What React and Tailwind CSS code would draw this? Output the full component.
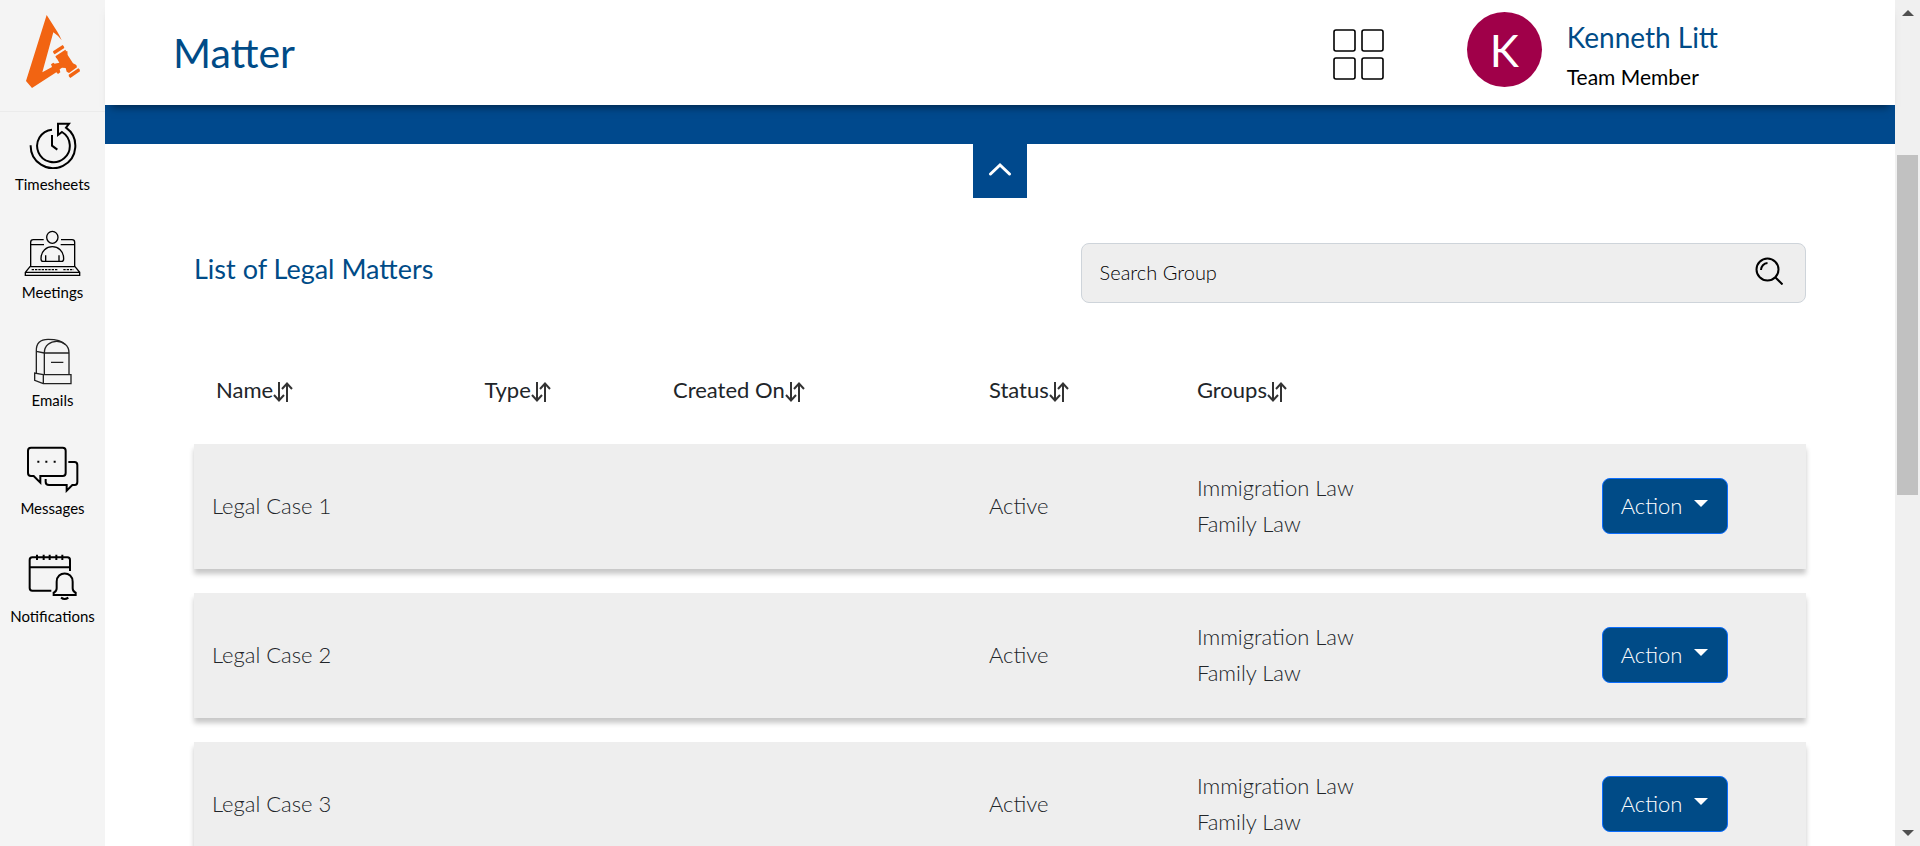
import React from "react";

function LogoIcon() {
  return (
    <svg viewBox="75 42 168 225" className="h-[75px] w-14" fill="#f26412" aria-hidden="true">
      <path d="M140 45 L172 95 Q180 108 185 121 Q174 106 160 97 L127 217 L156 201 L153 193 L160 188 L164 191 L178 188 L172 178 L167 172 L192 155 L202 153 L203 165 L219 190 L229 195 L231 202 L207 219 L200 215 L197 204 L186 203 L179 208 L181 217 L174 222 L169 217 L96 264 L78 243 Z" />
      <path d="M159 154 L188 135 Q192 138 193 144 L164 163 Q159 160 159 154Z" />
      <path d="M166 169 L196 149 L199 154 L170 174Z" />
      <path d="M206 224 L235 205 Q240 207 240 214 L211 234 Q205 230 206 224Z" />
    </svg>
  );
}

function TimesheetsIcon() {
  return (
    <svg viewBox="88 366 144 141" className="h-[47px] w-12" fill="none" stroke="#000" strokeWidth="6" aria-hidden="true">
      <path d="M157 389 A49 49 0 1 0 187 396 L175 405 V371 H208 L199 383 A67 67 0 1 1 93 436" />
      <path d="M157 405 V437 L173 449" />
    </svg>
  );
}

function MeetingsIcon() {
  return (
    <svg viewBox="74 60 171 141" className="h-[47px] w-[57px]" fill="none" stroke="#000" strokeWidth="4" aria-hidden="true">
      <ellipse cx="159" cy="82" rx="17" ry="18" />
      <path d="M131 154 Q125 154 125 146 C125 98 193 98 193 146 Q193 154 187 154 Z M139 136 V154 M179 136 V154" />
      <path d="M94 168 V97 Q94 89 102 89 H133 M185 89 H218 Q226 89 226 97 V168 M94 104 H134 M184 104 H226" />
      <path d="M78 187 L92 170 H227 L241 187 V196 H78 Z M78 187 H241" />
      <path d="M97 179 H174 M192 179 H223" strokeDasharray="7 3" />
    </svg>
  );
}

function EmailsIcon() {
  return (
    <svg viewBox="100 384 120 141" className="h-[47px] w-10" fill="none" stroke="#222" strokeWidth="4" aria-hidden="true">
      <path d="M134 492 V428 C134 383 208 383 208 428 V492 M134 429 H208" />
      <path d="M110 489 V424 C109 400 122 388 145 388 C168 388 187 392 196 403 M110 424 L134 429" />
      <path d="M131 494 H214 V521 H131 Z M131 494 L105 489 V511 L131 521 M154 457 H191" />
    </svg>
  );
}

function MessagesIcon() {
  return (
    <svg viewBox="80 78 159 141" className="h-[47px] w-[53px]" fill="none" stroke="#000" strokeWidth="6" aria-hidden="true">
      <path d="M95 83 H190 Q199 83 199 92 V159 Q199 168 190 168 H123 V188 L103 168 H95 Q86 168 86 159 V92 Q86 83 95 83 Z" />
      <path d="M207 126 H225 Q234 126 234 135 V186 Q234 195 226 195 H219 L202 212 V195 H149 Q139 195 139 186 V177" />
      <path d="M114 125 H120 M138 125 H144 M163 125 H169" />
    </svg>
  );
}

function NotificationsIcon() {
  return (
    <svg viewBox="86 402 147 141" className="h-[47px] w-[49px]" fill="none" stroke="#000" strokeWidth="6" aria-hidden="true">
      <path d="M156 512 H99 Q91 512 91 504 V420 Q91 412 99 412 H204 Q212 412 212 420 V453 M91 442 H212" />
      <path d="M113 404 V420 M133 404 V420 M151 404 V420 M171 404 V420 M189 404 V420" />
      <path d="M163 525 V518 Q172 515 172 505 V485 C172 452 220 452 220 485 V505 Q220 515 229 518 V525 Z M185 533 Q196 541 207 533" />
    </svg>
  );
}

function AppsIcon() {
  return (
    <svg viewBox="0 0 51 51" className="size-[51px]" fill="none" stroke="#000" strokeWidth="1.6" aria-hidden="true">
      <rect x="1" y="1" width="21" height="21" rx="2" />
      <rect x="29" y="1" width="21" height="21" rx="2" />
      <rect x="1" y="29" width="21" height="21" rx="2" />
      <rect x="29" y="29" width="21" height="21" rx="2" />
    </svg>
  );
}

function SearchIcon() {
  return (
    <svg viewBox="0 0 28 28" className="size-7" fill="none" stroke="#000" strokeWidth="2" aria-hidden="true">
      <circle cx="12.5" cy="12.5" r="11" />
      <path d="M20.5 20.5 L27.5 27.5" />
      <path d="M6 13 A7 7 0 0 1 12.5 6" />
    </svg>
  );
}

function SortIcon() {
  return (
    <svg viewBox="0 0 20 20" className="mt-1 size-5 shrink-0" fill="none" stroke="#333" strokeWidth="2" aria-hidden="true">
      <path d="M6 0 V18 M1 13 L6 18.5 L11 13" />
      <path d="M14 20 V2 M9 7 L14 1.5 L19 7" />
    </svg>
  );
}

const navItems = [
  { label: "Timesheets", Icon: TimesheetsIcon },
  { label: "Meetings", Icon: MeetingsIcon },
  { label: "Emails", Icon: EmailsIcon },
  { label: "Messages", Icon: MessagesIcon },
  { label: "Notifications", Icon: NotificationsIcon },
];

const columns = ["Name", "Type", "Created On", "Status", "Groups"];

const matters = [
  { name: "Legal Case 1", status: "Active", groups: ["Immigration Law", "Family Law"] },
  { name: "Legal Case 2", status: "Active", groups: ["Immigration Law", "Family Law"] },
  { name: "Legal Case 3", status: "Active", groups: ["Immigration Law", "Family Law"] },
];

function Sidebar() {
  return (
    <aside className="w-[105px] shrink-0 bg-[#f4f4f4]">
      <a href="#home" aria-label="Home" className="flex h-28 justify-center border-b border-[#ebebeb] pt-[14px]">
        <LogoIcon />
      </a>
      <nav>
        {navItems.map(({ label, Icon }) => (
          <a key={label} href={"#" + label.toLowerCase()} className="flex h-[108px] flex-col items-center gap-[3px] pt-[10px]">
            <Icon />
            <span className="text-[15px] leading-6 text-black">{label}</span>
          </a>
        ))}
      </nav>
    </aside>
  );
}

function Header() {
  return (
    <header className="relative z-10 flex h-[105px] shrink-0 items-start justify-between bg-white pr-[177px] pl-[68px] shadow-[0_8px_8px_-6px_rgba(0,0,0,0.5)]">
      <h1 className="pt-[23px] text-[41px] leading-[60px] text-[#004b87]">Matter</h1>
      <div className="flex">
        <button type="button" aria-label="Apps" className="mt-[29px] h-[51px]">
          <AppsIcon />
        </button>
        <div className="mt-3 ml-[83px] flex size-[75px] items-center justify-center rounded-full bg-[#a00049] text-[44px] text-white">
          K
        </div>
        <div className="ml-[25px] pt-[17px] whitespace-nowrap">
          <p className="text-[28px] leading-10 text-[#004b87]">Kenneth Litt</p>
          <p className="text-[21px] leading-10 text-black">Team Member</p>
        </div>
      </div>
    </header>
  );
}

function MattersTable() {
  return (
    <table className="mt-10 w-full table-fixed border-separate border-spacing-x-0 border-spacing-y-6 text-left text-[22px] text-[#212529]">
      <colgroup>
        <col className="w-[16.9%]" />
        <col className="w-[11.7%]" />
        <col className="w-[19.6%]" />
        <col className="w-[12.9%]" />
        <col className="w-[25.1%]" />
        <col />
      </colgroup>
      <thead>
        <tr className="h-[53px]">
          {columns.map((column) => (
            <th key={column} scope="col" className="pb-2 pl-[18px] align-middle font-normal first:pl-[22px]">
              <button type="button" className="flex items-center whitespace-nowrap">
                {column}
                <SortIcon />
              </button>
            </th>
          ))}
          <td />
        </tr>
      </thead>
      <tbody className="font-light">
        {matters.map((matter) => (
          <tr key={matter.name} className="h-[125px] bg-[#eee] shadow-[0_5px_5px_rgba(0,0,0,0.22)]">
            <td className="pb-[2px] pl-[18px]">{matter.name}</td>
            <td />
            <td />
            <td className="pb-[2px] pl-[18px]">{matter.status}</td>
            <td className="pb-[2px] pl-[18px] leading-9">
              {matter.groups.map((group) => (
                <p key={group}>{group}</p>
              ))}
            </td>
            <td className="pb-[2px] pl-[18px]">
              <button
                type="button"
                className="flex h-14 w-[126px] items-center justify-center gap-3 rounded-lg border border-[#0d6efd] bg-[#004b87] text-white"
              >
                Action
                <span className="-mt-1 border-x-[7px] border-t-[7px] border-x-transparent border-t-white" />
              </button>
            </td>
          </tr>
        ))}
      </tbody>
    </table>
  );
}

function ScrollRail() {
  return (
    <div className="flex w-[25px] shrink-0 flex-col items-center justify-between bg-[#f0f0f0] py-[10px]" aria-hidden="true">
      <span className="border-x-[6px] border-b-[6px] border-x-transparent border-b-[#505050]" />
      <div className="w-full flex-1 px-[2px] pt-[139px]">
        <div className="h-[340px] bg-[#c1c1c1]" />
      </div>
      <span className="border-x-[6px] border-t-[6px] border-x-transparent border-t-[#505050]" />
    </div>
  );
}

export default function App() {
  return (
    <div className="flex h-screen overflow-hidden bg-white font-['Gill_Sans_MT',Lato,sans-serif]">
      <Sidebar />
      <div className="flex min-w-0 flex-1 flex-col">
        <Header />
        <main className="min-h-0 flex-1 overflow-hidden">
          <div className="h-[39px] bg-[#00498d]" />
          <button type="button" aria-label="Collapse" className="mx-auto flex h-[54px] w-[54px] items-start justify-center bg-[#00498d] pt-[18px]">
            <svg viewBox="0 0 24 14" className="h-[14px] w-6" fill="none" stroke="#fff" strokeWidth="3" strokeLinecap="round" aria-hidden="true">
              <path d="M2.5 12 L12 3 L21.500 12" />
            </svg>
          </button>
          <section className="px-[89px] pt-[45px]">
            <div className="flex items-start justify-between">
              <h2 className="pt-[6px] text-[27px] leading-10 text-[#004b87]">List of Legal Matters</h2>
              <label className="flex h-[60px] w-[45%] items-center rounded-lg border border-[#ced4da] bg-[#eee] pr-[22px] pb-1 pl-[18px]">
                <input
                  type="search"
                  aria-label="Search Group"
                  placeholder="Search Group"
                  className="min-w-0 flex-1 bg-transparent pt-[2px] text-[20px] font-light outline-none placeholder:text-black"
                />
                <SearchIcon />
              </label>
            </div>
            <MattersTable />
          </section>
        </main>
      </div>
      <ScrollRail />
    </div>
  );
}
